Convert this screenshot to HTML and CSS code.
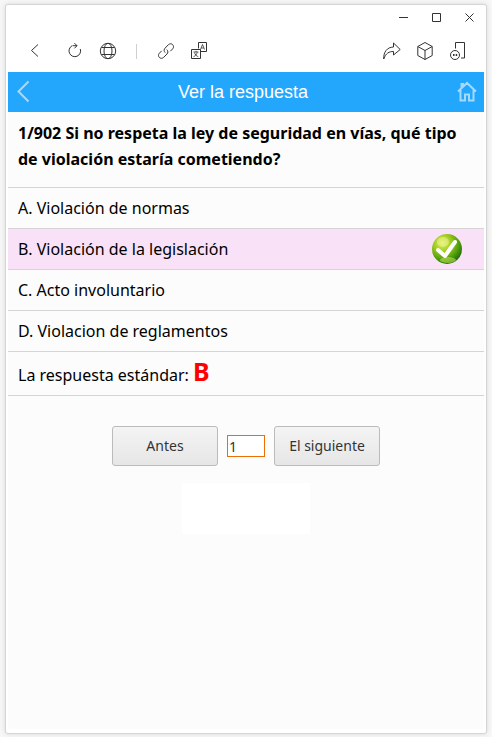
FILE: index.html
```html
<!DOCTYPE html>
<html lang="es">
    <head>
        <meta charset="utf-8">
        <meta name="viewport" content="width=device-width, initial-scale=1">
        <title>Ver la respuesta</title>
        <link rel="stylesheet" href="styles.css">
    </head>
    <body>
        <div id="window">
            <div id="titlebar">
                <button class="iconButton" aria-label="Minimizar">
                    <svg width="12" height="12" viewBox="0 0 12 12"><path d="M1 5.5h9"/></svg>
                </button>
                <button class="iconButton" aria-label="Maximizar">
                    <svg width="12" height="12" viewBox="0 0 12 12"><path d="M1.5 1.5h8v8h-8z"/></svg>
                </button>
                <button class="iconButton" aria-label="Cerrar">
                    <svg width="12" height="12" viewBox="0 0 12 12"><path d="M1.5 1.5l8 8M9.5 1.5l-8 8"/></svg>
                </button>
            </div>

            <div id="toolbar">
                <button class="iconButton back" aria-label="Volver">
                    <svg width="20" height="20" viewBox="0 0 20 20"><path d="M13 3.5L6.500 9.500l6.500 6"/></svg>
                </button>
                <button class="iconButton" aria-label="Recargar">
                    <svg width="20" height="20" viewBox="0 0 20 20"><path d="M7 4.800a5.800 5.800 0 1 0 8.300 3.200M9.500 2.200l2.500 2.500-2.500 2.600M12 4.700H7.500"/></svg>
                </button>
                <button class="iconButton" aria-label="Idioma">
                    <svg width="20" height="20" viewBox="0 0 20 20"><circle cx="10" cy="10" r="7.700"/><ellipse cx="10" cy="10" rx="4" ry="7.700"/><path d="M3.500 6.500h13M3.500 13.500h13"/></svg>
                </button>
                <span class="separator"></span>
                <button class="iconButton" aria-label="Copiar enlace">
                    <svg width="20" height="20" viewBox="0 0 20 20"><path d="M9.200 11.600C7.700 10.200 7.900 8.300 9 7.200l3.400-3.500c1.200-1.200 3-1.200 4.200-.1s1.200 3 .1 4.200l-2.300 2.400"/><path d="M10.800 8.600c1.500 1.400 1.300 3.300.2 4.400l-3.400 3.400c-1.200 1.200-3 1.200-4.200.1s-1.200-3-.1-4.200l2.300-2.400"/></svg>
                </button>
                <button class="iconButton" aria-label="Traducir">
                    <svg width="20" height="20" viewBox="0 0 20 20"><path d="M9.500 7.500v-6h8v9h-6M2.500 8.500h9v9h-9z"/><path class="fine" d="M11.500 8.500l2-5 2 5M12.200 7h2.600M4.500 11h5M7 9.800v1.200M4.500 15.700c2-.8 3-2 3.800-4.500M5.500 11.500c.5 2 1.700 3.400 3.800 4.200"/></svg>
                </button>
                <span class="spacer"></span>
                <button class="iconButton" aria-label="Compartir">
                    <svg width="20" height="20" viewBox="0 0 20 20"><path d="M11.500 2l6.700 6.500-6.700 5.500v-3.500c-4.500 0-7.500 1.500-9.800 7.500C1.500 11 5 6.200 11.500 6z"/></svg>
                </button>
                <button class="iconButton" aria-label="Aplicaciones">
                    <svg width="20" height="20" viewBox="0 0 20 20"><path d="M10 1.500l7.200 4v9L10 18.500l-7.200-4v-9zM2.800 5.500L10 9.500l7.200-4M10 9.500v9"/></svg>
                </button>
                <button class="iconButton" aria-label="Abrir en el teléfono">
                    <svg width="20" height="20" viewBox="0 0 20 20"><path d="M7.500 7.500v-6h9v15.500H13"/><circle cx="7" cy="14" r="4.500"/><path class="dots" d="M5 14h1.500M7.700 14h1.500"/></svg>
                </button>
            </div>

            <header id="pageHeader">
                <a href="#" aria-label="Atrás">
                    <svg width="18" height="24" viewBox="0 0 18 24"><path d="M15.500 1.500L5.500 11.500l10 10"/></svg>
                </a>
                <h1>Ver la respuesta</h1>
                <a href="#" aria-label="Inicio">
                    <svg width="24" height="24" viewBox="0 0 24 24"><path d="M3 11.500L12 3l9 8.500M5.500 10v10.500H10v-6h4v6h4.500V10M6.500 8V4H8v2.500"/></svg>
                </a>
            </header>

            <main>
                <h2 id="question">1/902 Si no respeta la ley de seguridad en vías, qué tipo de violación estaría cometiendo?</h2>
                <ul id="answers">
                    <li>A. Violación de normas</li>
                    <li class="correct">B. Violación de la legislación
                        <svg width="30" height="30" viewBox="0 0 30 30" role="img" aria-label="Correcta">
                            <defs>
                                <radialGradient id="ball" cx="0.35" cy="0.3" r="0.75">
                                    <stop offset="0" stop-color="#e2f06a"/>
                                    <stop offset="0.4" stop-color="#9ccb1c"/>
                                    <stop offset="0.75" stop-color="#4c9a0c"/>
                                    <stop offset="1" stop-color="#1f6a08"/>
                                </radialGradient>
                            </defs>
                            <circle cx="15" cy="15" r="15" fill="url(#ball)"/>
                            <ellipse cx="16" cy="26" rx="8" ry="3" fill="#d6ee62" opacity="0.5"/>
                            <ellipse cx="11" cy="8" rx="6" ry="5" fill="#f1f595" opacity="0.5"/>
                            <path d="M6 16l7 6L23 8" fill="none" stroke="#fff" stroke-width="4" stroke-linecap="round" stroke-linejoin="round"/>
                        </svg>
                    </li>
                    <li>C. Acto involuntario</li>
                    <li>D. Violacion de reglamentos</li>
                </ul>
                <p id="standard">La respuesta estándar: <strong>B</strong></p>

                <form id="pager">
                    <button type="button" class="pageButton">Antes</button>
                    <input type="text" id="pageNumber" value="1" aria-label="Número de pregunta">
                    <button type="button" class="pageButton">El siguiente</button>
                </form>
                <div id="blank"></div>
            </main>
        </div>
    </body>
</html>
```

FILE: styles.css
```css
* {
    box-sizing: border-box;
}

body {
    margin: 0;
    padding: 4px 5px 3px;
    min-height: 100vh;
    display: flex;
    background-color: #f7f7f7;
    font-family: "Noto Sans", "Segoe UI", sans-serif;
    font-size: 16px;
    color: #000;
}

#window {
    flex: 1;
    display: flex;
    flex-direction: column;
    padding: 0 2px 4px;
    border: 1px solid #d5d5d5;
    border-radius: 3px;
    background-color: #fff;
    box-shadow: 0 0 5px rgba(0, 0, 0, 0.12);
}

/* browser chrome */
#titlebar {
    display: flex;
    justify-content: flex-end;
    height: 25px;
    margin-right: -2px;
}

#toolbar {
    display: flex;
    align-items: center;
    height: 42px;
    padding: 0 10px;
}

.iconButton {
    display: flex;
    align-items: center;
    justify-content: center;
    width: 33px;
    padding: 0;
    border: none;
    background: none;
    cursor: pointer;
}

.iconButton svg {
    fill: none;
    stroke: #333;
    stroke-width: 1;
}

.iconButton .dots {
    stroke-width: 2;
}

.iconButton .fine {
    stroke-width: 0.8;
}

.back {
    margin-right: 7px;
}

.separator {
    width: 1px;
    height: 15px;
    margin: 0 12px;
    background-color: #d0d0d0;
}

.spacer {
    flex: 1;
}

#pageHeader {
    display: flex;
    align-items: center;
    justify-content: space-between;
    height: 40px;
    padding: 0 5px;
    background-color: #23a7fd;
}

#pageHeader h1 {
    margin: 0;
    font-family: "Liberation Sans", Arial, sans-serif;
    font-size: 18px;
    font-weight: normal;
    color: #fff;
}

#pageHeader a {
    display: flex;
}

#pageHeader svg {
    fill: none;
    stroke: #a3dafe;
    stroke-width: 2;
}

main {
    flex: 1;
    background-color: #fcfcfc;
}

#question {
    margin: 0;
    padding: 8px 10px 15px;
    font-size: 16px;
    line-height: 26px;
    border-bottom: 1px solid #d5d5d5;
}

#answers {
    margin: 0;
    padding: 0;
    list-style: none;
}

#answers li {
    display: flex;
    align-items: center;
    justify-content: space-between;
    height: 41px;
    padding: 0 22px 0 10px;
    border-bottom: 1px solid #d5d5d5;
}

#answers .correct {
    background-color: #f9e2f8;
}

#standard {
    margin: 0;
    padding: 7px 10px 4px;
    line-height: 32px;
    border-bottom: 1px solid #d5d5d5;
}

#standard strong {
    font-size: 25px;
    line-height: 24px;
    color: #f00;
}

#pager {
    display: flex;
    align-items: center;
    justify-content: center;
    gap: 9px;
    margin-top: 30px;
}

.pageButton {
    width: 106px;
    height: 40px;
    padding: 0 0 2px;
    border: 1px solid #bbb;
    border-radius: 3px;
    background: linear-gradient(#f4f4f4, #e6e6e6);
    font-family: inherit;
    font-size: 14px;
    color: #333;
    cursor: pointer;
}

#pageNumber {
    width: 38px;
    height: 22px;
    padding: 0 1px;
    border: 1px solid #eb6f00;
    background-color: #fff;
    font-family: inherit;
    font-size: 14px;
    color: #333;
}

#blank {
    width: 128px;
    height: 51px;
    margin: 17px auto 0;
    background-color: #fff;
}
```
